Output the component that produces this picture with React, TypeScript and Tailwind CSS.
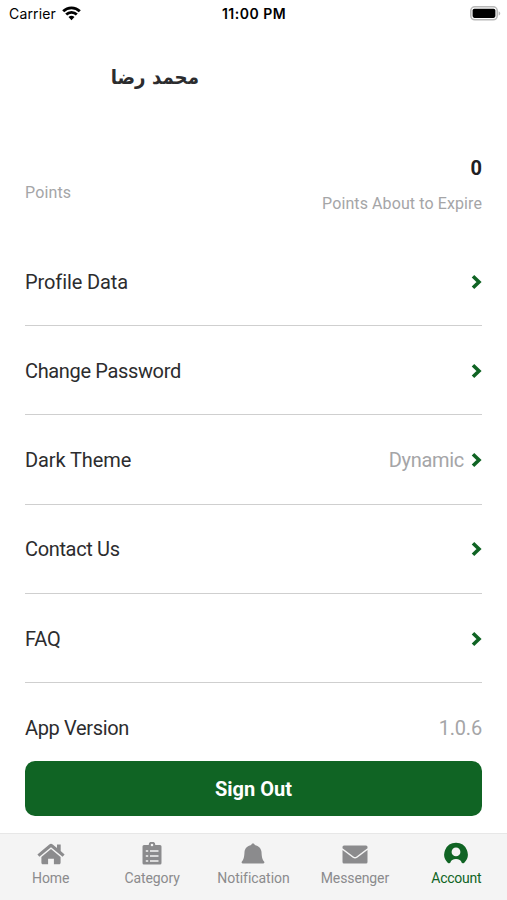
import type { ReactNode } from "react";

type Row = {
  label: string;
  labelClass: string;
  value?: string;
  valueClass?: string;
  arrow: boolean;
};

const rows: Row[] = [
  { label: "Profile Data", labelClass: "tracking-[-0.1px]", arrow: true },
  { label: "Change Password", labelClass: "tracking-[-0.35px]", arrow: true },
  { label: "Dark Theme", labelClass: "tracking-[-0.1px]", value: "Dynamic", valueClass: "tracking-[-0.3px]", arrow: true },
  { label: "Contact Us", labelClass: "tracking-[-0.35px]", arrow: true },
  { label: "FAQ", labelClass: "tracking-[-0.2px]", arrow: true },
  { label: "App Version", labelClass: "tracking-[-0.35px]", value: "1.0.6", valueClass: "tracking-[-0.2px]", arrow: false },
];

export default function App() {
  return (
    <div className="flex h-[900px] w-[507px] flex-col overflow-hidden bg-white font-['Roboto','Noto_Sans',sans-serif] text-[#2c2c2e]">
      <StatusBar />
      <main className="flex flex-1 flex-col px-[25px]">
        <h1
          dir="rtl"
          lang="ar"
          className="mt-[31px] ml-[86px] h-[38px] w-[88px] origin-right scale-x-[0.91] font-['DejaVu_Sans',sans-serif] text-[20px] leading-[38px] font-bold whitespace-nowrap"
        >
          محمد رضا
        </h1>
        <Points />
        <ul className="mt-[19px]">
          {rows.map((row) => (
            <SettingsRow key={row.label} row={row} />
          ))}
        </ul>
        <button className="h-[55px] shrink-0 rounded-[10px] bg-[#106424] pt-px text-[20px] font-bold text-white">Sign Out</button>
      </main>
      <TabBar />
    </div>
  );
}

function StatusBar() {
  return (
    <header className="grid h-[27px] grid-cols-3 items-center pr-[6px] pl-[9px] font-['Inter',sans-serif] text-black">
      <div className="flex items-center gap-[6px] text-[14px] tracking-[0.15px]">
        Carrier
        <svg width="19" height="15" viewBox="0 0 19 15" fill="none" stroke="currentColor" strokeWidth="2.8">
          <path d="M1.200 5.300a11.700 11.700 0 0 1 16.600 0" />
          <path d="M4.200 8.500a7.500 7.500 0 0 1 10.600 0" />
          <path d="M9.500 14.200 6.500 11.100a4.300 4.300 0 0 1 6 0z" fill="currentColor" stroke="none" />
        </svg>
      </div>
      <div className="pr-[2px] text-center text-[14px] font-semibold tracking-[0.5px] whitespace-nowrap">11:00 PM</div>
      <svg className="justify-self-end" width="31" height="15" viewBox="0 0 31 15">
        <rect x="0.8" y="0.8" width="26.4" height="13" rx="4" fill="white" stroke="#b8b8b8" strokeWidth="1.6" />
        <rect x="2.600" y="2.700" width="22.800" height="9.200" rx="1.800" fill="black" />
        <path d="M28.600 5.200c2.200.8 2.200 3.500 0 4.300z" fill="#b8b8b8" />
      </svg>
    </header>
  );
}

function Points() {
  return (
    <section className="mt-[56px] flex h-[66px] items-center justify-between text-[#a5a5a7]">
      <span className="pt-[16px] text-[16px] tracking-[0.15px]">Points</span>
      <div className="flex flex-col items-end">
        <strong className="h-[35px] text-[20px] leading-[32px] font-bold text-[#202022]">0</strong>
        <span className="h-[31px] text-[16px] leading-[34px] tracking-[0.1px]">Points About to Expire</span>
      </div>
    </section>
  );
}

function SettingsRow({ row }: { row: Row }) {
  return (
    <li className="flex h-[89.200px] items-center justify-between border-b border-[#cfcfcf] pt-[1.500px] text-[20px] last:h-[78px] last:border-0 last:pt-[13px]">
      <span className={row.labelClass}>{row.label}</span>
      <span className="flex items-center gap-[7px] text-[#a5a5a7]">
        {row.value ? <span className={row.valueClass}>{row.value}</span> : null}
        {row.arrow ? <ArrowIcon /> : null}
      </span>
    </li>
  );
}

function ArrowIcon() {
  return (
    <svg width="11" height="16" viewBox="0 0 11 16" fill="none" stroke="#106424" strokeWidth="3.600">
      <path d="M2 2.200 8 8l-6 5.800" strokeLinejoin="miter" />
    </svg>
  );
}

function TabBar() {
  return (
    <nav className="grid h-[67px] shrink-0 grid-cols-5 border-t border-[#e7e7e7] bg-[#f4f4f4] text-[#8b8b8d]">
      <Tab label="Home" labelClass="tracking-[-0.1px]" icon={<HomeIcon />} />
      <Tab label="Category" labelClass="tracking-[-0.1px]" icon={<ClipboardIcon />} />
      <Tab label="Notification" labelClass="tracking-[-0.05px]" icon={<BellIcon />} />
      <Tab label="Messenger" labelClass="tracking-[-0.1px]" icon={<MailIcon />} />
      <Tab label="Account" labelClass="tracking-[-0.25px]" icon={<AccountIcon />} active />
    </nav>
  );
}

function Tab({ label, labelClass, icon, active }: { label: string; labelClass: string; icon: ReactNode; active?: boolean }) {
  return (
    <a className={`flex flex-col items-center pt-[7px] text-[14px] ${active ? "text-[#106424]" : ""}`}>
      <span className="flex h-[25px] items-center justify-center">{icon}</span>
      <span className={`leading-[24px] ${labelClass}`}>{label}</span>
    </a>
  );
}

function HomeIcon() {
  return (
    <svg width="28" height="22" viewBox="0 0 28 22" fill="currentColor">
      <path d="M12.300 1.400c1-.8 2.400-.8 3.400 0L20 5V1.500h3.700v6.600l3.900 3.300-2 2.400L14 4.200 2.400 13.800l-2-2.400z" />
      <path d="M14 6 23.600 14v5.700c0 .9-.6 1.500-1.500 1.500h-5.200v-5.400h-5.800v5.400H5.900c-.9 0-1.500-.6-1.500-1.500V14z" />
    </svg>
  );
}

function ClipboardIcon() {
  return (
    <svg width="20" height="23" viewBox="0 0 20 23" fill="currentColor">
      <path
        fillRule="evenodd"
        d="M2 3h4.700a3.300 3.300 0 0 1 6.600 0H18a1.500 1.500 0 0 1 1.500 1.500V21a1.500 1.500 0 0 1-1.500 1.500H2A1.500 1.500 0 0 1 .5 21V4.500A1.500 1.500 0 0 1 2 3zm8-1.300a1.300 1.300 0 1 0 0 2.600 1.300 1.300 0 0 0 0-2.600zM3.800 8.200v1.500h2.400V8.200zm4.200 0v1.500h8.500V8.200zm-4.200 5v1.500h2.400v-1.500zm4.200 0v1.500h8.500v-1.500zm-4.200 5v1.500h2.400v-1.500zm4.200 0v1.500h8.500v-1.500z"
      />
    </svg>
  );
}

function BellIcon() {
  return (
    <svg width="24" height="22" viewBox="0 0 24 22" fill="currentColor">
      <path d="M12 .4c1 0 1.700.7 1.800 1.500 4 .8 6.500 3.600 6.700 7.100.3 4.800.6 7.300 2.600 9.500.5.600.4 2-.8 2H1.700c-1.200 0-1.300-1.400-.8-2 2-2.200 2.300-4.700 2.600-9.500.2-3.500 2.700-6.300 6.700-7.100C10.300 1.100 11 .4 12 .4z" />
    </svg>
  );
}

function MailIcon() {
  return (
    <svg width="26" height="20" viewBox="0 0 26 20" fill="currentColor">
      <path d="M2 1.500h22A1.500 1.500 0 0 1 25.500 3v1.200l-11 8.300c-1 .7-2 .7-3 0L.5 4.200V3A1.500 1.500 0 0 1 2 1.500z" />
      <path d="m.5 6 10.300 7.800c1.500 1 2.900 1 4.400 0L25.500 6v12a1.500 1.500 0 0 1-1.500 1.500H2A1.500 1.500 0 0 1 .5 18z" />
    </svg>
  );
}

function AccountIcon() {
  return (
    <svg width="24" height="23" viewBox="0 0 24 23" fill="currentColor">
      <path
        fillRule="evenodd"
        d="M12 .7a11.700 11.700 0 0 1 8.300 20c-.9.800-2.500.8-2.700-.2-.4-2.200-2.700-3.500-5.600-3.500s-5.200 1.300-5.600 3.500c-.2 1-1.800 1-2.700.2A11.700 11.700 0 0 1 12 .7zm0 4.800a4.400 4.400 0 1 0 0 8.800 4.400 4.400 0 0 0 0-8.800z"
      />
    </svg>
  );
}
